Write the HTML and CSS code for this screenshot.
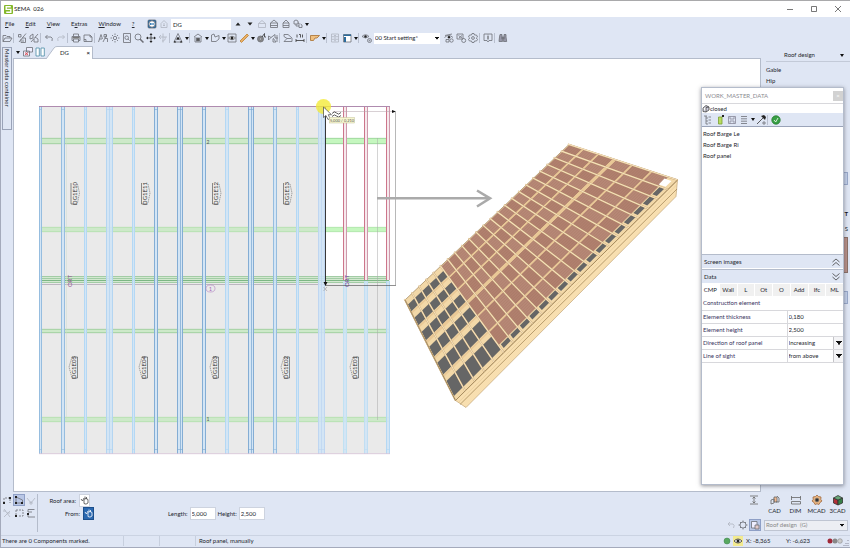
FILE: index.html
```html
<!DOCTYPE html>
<html lang="en">
<head>
<meta charset="utf-8">
<title>SEMA 026</title>
<link rel="stylesheet" href="styles.css">
</head>
<body>
<header class="titlebar">
  <svg class="logo" viewBox="0 0 9 9"><rect width="9" height="9" rx="1" fill="#84b82c"/><path d="M6.8 1.8H2.2V4.4H6.8V7.2H2.2" fill="none" stroke="#fff" stroke-width="1.4"/></svg>
  <h1>SEMA&nbsp; 026</h1>
  <div class="winbtns">
    <button aria-label="Minimize"><svg viewBox="0 0 8 8"><path d="M1 4.5H7"/></svg></button>
    <button aria-label="Maximize"><svg viewBox="0 0 8 8"><path d="M1.5 1.5H6.5V6.5H1.5Z"/></svg></button>
    <button aria-label="Close"><svg viewBox="0 0 8 8"><path d="M1 1L7 7M7 1L1 7"/></svg></button>
  </div>
</header>

<nav class="menubar">
  <div class="menus">
    <button><u>F</u>ile</button><button><u>E</u>dit</button><button><u>V</u>iew</button><button>E<u>x</u>tras</button><button><u>W</u>indow</button><button><u>?</u></button>
  </div>
  <button class="ib" aria-label="Remote"><svg viewBox="0 0 12 12"><rect x="2" y="2" width="8" height="8" rx="1" fill="#0b62a8"/><circle cx="6" cy="6" r="3.2" fill="#fff"/><path d="M3.5 6L5 4.8V7.2ZM8.5 6L7 4.8V7.2ZM4.5 5.6H7.5V6.4H4.5Z" fill="#0b62a8" stroke="none"/></svg></button>
  <button class="ib off" aria-label="Building"><svg viewBox="0 0 12 12"><path d="M3 5.5L6 2.5L9 5.5V9.5H3ZM6 5V8M5 7L6 8L7 7"/></svg></button>
  <input class="level" aria-label="Storey" value="DG">
  <button class="ib" aria-label="Up"><svg viewBox="0 0 12 12"><path class="k" d="M3.5 7.5L6 4.5L8.5 7.5Z"/></svg></button>
  <button class="ib" aria-label="Down"><svg viewBox="0 0 12 12"><path class="k" d="M3.5 4.5L6 7.5L8.5 4.5Z"/></svg></button>
  <button class="ib off" aria-label="Roof"><svg viewBox="0 0 12 12"><path d="M2.500 5.500L6 2.500L9.500 5.500V9.500H2.500ZM2.500 5.500H9.500"/></svg></button>
  <button class="ib" aria-label="Storey view"><svg viewBox="0 0 12 12"><path d="M2.500 5L6 2L9.500 5V9.500H2.500ZM2.500 5H9.500M2.500 7.500H9.500"/></svg></button>
  <button class="ib" aria-label="House view"><svg viewBox="0 0 12 12"><path d="M3 5L6 2L9 5V9.500H3ZM3 5H9M3 7.500H9"/></svg></button>
  <button class="ib" aria-label="Structure"><svg viewBox="0 0 12 12"><path d="M2 3L4 2L6 3V6H2ZM6 5H7V9.500H10V7L8.500 6M4 6V8H7"/></svg></button>
  <button class="caret" aria-label="More"></button>
</nav>

<div class="toolbar">
  <button class="ib" aria-label="Open"><svg viewBox="0 0 12 12"><path d="M2 9.500V3.500H5L6 4.500H9V6M2 9.500L4 6H11L9 9.500Z"/></svg></button><i></i>
  <button class="ib" aria-label="Cut"><svg viewBox="0 0 12 12"><path d="M2.500 2.500H5V5H2.500ZM10 1.500L3 10M6 6H9.500V10.500H5V7M7 7.500V10"/></svg></button>
  <button class="ib" aria-label="Copy"><svg viewBox="0 0 12 12"><path d="M2 4L5 2V6L2 7ZM10 2L3 10M7 5L10 7V10H6V7"/></svg></button><i></i>
  <button class="ib" aria-label="Undo"><svg viewBox="0 0 12 12"><path d="M4.500 3L2.500 5L4.500 7M2.500 5H8Q10 5.500 9 9"/></svg></button>
  <button class="ib off" aria-label="Redo"><svg viewBox="0 0 12 12"><path d="M7.500 3L9.500 5L7.500 7M9.500 5H4Q2 5.500 3 9"/></svg></button><i></i>
  <button class="ib" aria-label="Print"><svg viewBox="0 0 12 12"><path d="M3.500 4.500V2H8.500V4.500M3.500 8.500H2V4.500H10V8.500H8.500M3.500 7H8.500V10H3.500Z"/><path d="M2.500 5H9.500V6.500H2.500Z" fill="#777" stroke="none"/></svg></button>
  <button class="ib" aria-label="Page"><svg viewBox="0 0 12 12"><path d="M2 3H8L10 5V9.500H2ZM8 3V5H10M2 7.500H4V9.500"/></svg></button><i></i>
  <button class="ib" aria-label="Marking"><svg viewBox="0 0 12 12"><path d="M1.500 10L4 2.500L5.500 7M2.500 7H5M6 10L9.500 3M7 2.500H9.500V5H7ZM8 6.500H10.500V10"/></svg></button>
  <button class="ib" aria-label="Highlight"><svg viewBox="0 0 12 12"><circle cx="6" cy="6" r="1.700"/><path d="M6 1.500V3M6 9V10.500M1.500 6H3M9 6H10.500M3 3L4 4M8 8L9 9M9 3L8 4M4 8L3 9"/></svg></button>
  <button class="ib" aria-label="Zoom page"><svg viewBox="0 0 12 12"><path d="M2.500 1.500H9.500V10.500H2.500ZM7 7L8.500 8.500"/><circle cx="5.700" cy="5.700" r="1.800"/></svg></button>
  <button class="ib" aria-label="Zoom"><svg viewBox="0 0 12 12"><circle cx="5" cy="5" r="3"/><path d="M7 7L10.500 10.500" stroke-width="1.500"/></svg></button>
  <button class="ib" aria-label="Pan"><svg viewBox="0 0 12 12"><path d="M6 2V10M2 6H10" stroke="#333"/><path class="k" d="M6 1L7.500 3H4.500ZM6 11L7.500 9H4.500ZM1 6L3 4.500V7.500ZM11 6L9 4.500V7.500Z"/></svg></button>
  <button class="ib off" aria-label="Rotate"><svg viewBox="0 0 12 12"><path d="M6 1.500V10.500M2 5H10M4 3L2 5L4 7M8 5Q9 9 5 9"/></svg></button><i></i>
  <button class="ib" aria-label="Compass"><svg viewBox="0 0 12 12"><path d="M6 1.500L10 10H2ZM4 8Q6 5 8 8"/><circle class="k" cx="6" cy="6.500" r="1.300"/><path class="k" d="M1.500 10.500L3 8.500L4 10.500ZM8 10.500L9 8.500L10.500 10.500Z"/></svg></button><button class="caret" aria-label="More"></button><i></i>
  <button class="ib" aria-label="House"><svg viewBox="0 0 12 12"><path d="M2 5L6 2L10 5M3 5V10H9V5"/><rect x="4.500" y="6" width="3" height="3" fill="#555"/></svg></button><button class="caret" aria-label="More"></button>
  <button class="ib" aria-label="Shape"><svg viewBox="0 0 12 12"><path d="M2.500 3L5 2L6 5L10 3.500V7L7 9.500H2.500Z"/></svg></button><button class="caret" aria-label="More"></button>
  <button class="ib" aria-label="Visibility"><svg viewBox="0 0 12 12"><path d="M2 2H10V10H2Z"/><path d="M2.500 6Q6 2.500 9.500 6Q6 9.500 2.500 6Z" fill="#fff"/><circle class="k" cx="6" cy="6" r="1.500"/></svg></button>
  <button class="ib" aria-label="Beam"><svg viewBox="0 0 12 12"><path d="M2 9L9 2L10.500 3.500L3.500 10.500Z" fill="#e8b068" stroke="#c08030"/></svg></button><button class="caret" aria-label="More"></button>
  <button class="ib" aria-label="Machine"><svg viewBox="0 0 12 12"><circle cx="5.500" cy="7" r="3" fill="#888"/><circle cx="5.500" cy="7" r="1" fill="#eee"/><path d="M7 5L9.500 1.500V5H11" stroke="#333"/></svg></button>
  <button class="ib" aria-label="Connect"><svg viewBox="0 0 12 12"><path d="M1.500 4L4 5.500L1.500 8ZM4 5.500L8 2.500V6H11M6 6L9 10H6V7M10 3V10"/></svg></button><i></i>
  <button class="ib" aria-label="Profile"><svg viewBox="0 0 12 12"><path d="M2 2.500H6L10 6V9.500H2L5 6.500L2 4.500ZM5 6.500H9"/></svg></button>
  <button class="ib" aria-label="Dimension"><svg viewBox="0 0 12 12"><path d="M2 7V10M10 7V10M2 8.500H10M3 2.500V5.500M5 2.500H6.500V5.500M8.500 2.500V5.500" stroke="#333"/></svg></button><i></i>
  <button class="ib" aria-label="Timber"><svg viewBox="0 0 12 12"><path d="M1.500 3.500H10.500L8 6H6L4.500 8.500H1.500Z" fill="#f0c080" stroke="#a87030"/></svg></button><button class="caret" aria-label="More"></button><i></i>
  <button class="ib off" aria-label="Cabinet"><svg viewBox="0 0 12 12"><path d="M2.500 2H9.500V10H2.500ZM2.500 4.700H9.500M2.500 7.300H9.500M5 3.500H7M5 6H7M5 8.700H7"/></svg></button>
  <button class="ib" aria-label="Window layout"><svg viewBox="0 0 12 12"><path d="M2.500 2.500H10V10H2.500Z" fill="#fff"/><path d="M2.500 2.500H10V4H2.500ZM3 5H5V10H3Z" fill="#2a6a9c" stroke="none"/></svg></button><button class="caret" aria-label="More"></button><i></i>
  <button class="ib" aria-label="Display"><svg viewBox="0 0 12 12"><path d="M1 4.500Q4.500 1 8 4.500Q4.500 7.500 1 4.500Z"/><circle class="k" cx="4.500" cy="4.500" r="1.200"/><circle cx="8.500" cy="8.500" r="2"/><circle cx="8.500" cy="8.500" r=".5"/></svg></button>
  <select class="setting" aria-label="Display setting"><option>00 Start setting*</option></select>
  <button class="ib" aria-label="Show"><svg viewBox="0 0 12 12"><path d="M1.500 5.500Q5.500 1.500 10 5.500M3 7.500H6V10H3ZM2 3.500L9 2"/><circle class="k" cx="6" cy="5.300" r="1.200"/><circle cx="8.500" cy="8.500" r="1.700"/></svg></button>
  <button class="ib" aria-label="Edit display"><svg viewBox="0 0 12 12"><path d="M2 2H8V7H2ZM3.500 3.500L7 6M7 3.500L4 6"/><circle cx="8.700" cy="8.500" r="2"/></svg></button>
  <button class="ib" aria-label="Options"><svg viewBox="0 0 12 12"><path d="M5 1.500H7L7.500 3L9.500 3L10.500 5L9.300 6L10.500 7.500L9.500 9H7.500L7 10.500H5L4.500 9H2.500L1.500 7.500L2.700 6L1.500 5L2.500 3H4.500Z"/><circle cx="6" cy="6" r="1.400"/></svg></button><i></i>
  <button class="ib" aria-label="Info"><svg viewBox="0 0 12 12"><path d="M2 2H10V8.500H7L6 10L5 8.500H2Z"/><path d="M6 4V7.500M6 2.800V3.400" stroke="#222"/></svg></button><i></i>
  <button class="ib" aria-label="Search"><svg viewBox="0 0 12 12"><path d="M3 2.500H5V5L5.500 9.500H2L2.500 5ZM7 2.500H9V5L9.700 9.500H6.500L7 5ZM5 5H7V7H5Z" fill="#99a"/></svg></button>
</div>

<main class="main">
  <aside class="dock"><button>Master data container</button></aside>
  <section class="work">
    <div class="tabs">
      <button class="caret" aria-label="Windows"></button>
      <button class="ib" aria-label="Close window"><svg viewBox="0 0 12 12"><path d="M4.500 1.500H10.500V6H4.500ZM1.500 5H7.500V10H1.500Z" fill="#eef"/><path d="M3 6.500L6 9M6 6.500L3 9" stroke="#d33"/></svg></button>
      <button class="ib" aria-label="Tile windows"><svg viewBox="0 0 12 12"><path d="M2 2H5.300V10H2ZM7 2H10.300V10H7Z" fill="#fff" stroke="#4a8aa6"/></svg></button>
      <div class="doc"><svg viewBox="0 0 47 13" preserveAspectRatio="none"><path d="M0 13L8 2Q9 .5 11 .5H46.500V13" fill="#fff" stroke="#b4bccb"/></svg><span>DG</span><button aria-label="Close DG">×</button></div>
    </div>
    <svg class="canvas" id="canvas" viewBox="14 59 746 432" preserveAspectRatio="xMinYMin meet" role="img" aria-label="Roof plan and panel view"></svg>
  </section>
  <aside class="side">
    <div class="sidehead"><span>Roof design</span><button class="caret" aria-label="Roof design menu"></button></div>
    <a href="#">Gable</a><a href="#">Hip</a>
    <div class="edge"><b class="eb"></b><strong>T</strong><span>S</span><b class="brick"></b><b class="eb"></b></div>
  </aside>
</main>

<footer class="params">
  <div class="snaps">
    <button class="ib" aria-label="Snap 1"><svg viewBox="0 0 12 12"><path d="M3 9V4H9V9" stroke-dasharray="2 1"/><path class="k" d="M2 8H4V10H2ZM8 3H10V5H8Z"/></svg></button>
    <button class="ib on" aria-label="Snap 2"><svg viewBox="0 0 12 12"><path d="M3 3V9H9.500V6L3 3"/><path class="k" d="M2 2H4V4H2ZM2 8H4V10H2ZM8 8H10V10H8Z"/></svg></button>
    <button class="ib off" aria-label="Snap 3"><svg viewBox="0 0 12 12"><path d="M2 4L6 9L10 4M5 8H7V10H5Z"/></svg></button>
    <button class="ib off" aria-label="Snap 4"><svg viewBox="0 0 12 12"><path d="M3 2L9 10M9 4L3 10M6 6H9M2 4H5"/></svg></button>
    <button class="ib" aria-label="Snap 5"><svg viewBox="0 0 12 12"><path d="M3 3H10V9H5M3 3V8" stroke-dasharray="2 1"/><path class="k" d="M2 8H4V10H2Z"/></svg></button>
    <button class="ib" aria-label="Snap 6"><svg viewBox="0 0 12 12"><path d="M9.500 2.500H3V5H7M3 7V10H10"/><path class="k" d="M2 6H4V8H2Z"/></svg></button>
  </div>
  <div class="picks">
    <p class="area">Roof area: <button class="pick" aria-label="Pick roof area"><svg viewBox="0 0 9 11"><path d="M1 4L2.500 6L4 3M4 5V8.500Q6 10 8 8V4.500L6 3.500L4 4.500M5 4V1.500M6.500 4V2"/></svg></button></p>
    <p class="from">From: <button class="pick sel" aria-label="Pick start"><svg viewBox="0 0 9 11"><path d="M1 4L2.500 6L4 3M4 5V8.500Q6 10 8 8V4.500L6 3.500L4 4.500M5 4V1.500M6.500 4V2"/></svg></button></p>
  </div>
  <div class="sizes">
    <label for="len">Length:</label><input id="len" value="5,000">
    <label for="hgt">Height:</label><input id="hgt" value="2,500">
  </div>
  <div class="modes">
    <div class="moderow">
      <button class="mode" aria-label="Level"><svg viewBox="0 0 12 12"><path d="M2 2H10M2 10H10M6 3V9M4.500 4.500L6 3L7.500 4.500M4.500 7.500L6 9L7.500 7.500"/></svg></button>
      <button class="mode"><svg viewBox="0 0 12 12"><path d="M5 3H8V8H5Z" fill="#f0b890"/><path d="M2 6L5 5V9L2 10ZM8 2L10 4V8H7"/></svg>CAD</button>
      <button class="mode"><svg viewBox="0 0 12 12"><path d="M1.500 2V6M10.500 2V6M1.500 3.500H10.500M1.500 7.500H10.500V10H1.500Z"/></svg>DIM</button>
      <button class="mode"><svg viewBox="0 0 12 12"><path d="M6 1L7.500 2.500L10 3L9.800 5.500L11 7L9 8.500L8 10.500L6 9.800L4 10.500L3 8.500L1 7L2.200 5.500L2 3L4.500 2.500Z" fill="#e8b480" stroke="#a06a40"/><circle cx="6" cy="6" r="1.800" fill="#333"/></svg>MCAD</button>
      <button class="mode"><svg viewBox="0 0 12 12"><path d="M1.500 4L6 6V11L1.500 9Z" fill="#b03038" stroke="#333"/><path d="M6 6L10.500 4V9L6 11Z" fill="#388048" stroke="#333"/><path d="M1.500 4L6 1.500L10.500 4L6 6Z" fill="#68a878" stroke="#333"/></svg>3CAD</button>
    </div>
    <div class="moderow low">
      <button class="ib off" aria-label="Undo mode"><svg viewBox="0 0 12 12"><path d="M5 3L3 5L5 7M3 5H8Q10 6 8.500 9"/></svg></button>
      <button class="ib" aria-label="Mode options"><svg viewBox="0 0 12 12"><circle cx="6" cy="6" r="3"/><path d="M6 1.500V3M6 9V10.500M1.500 6H3M9 6H10.500M3 3L4 4M8 8L9 9M9 3L8 4M4 8L3 9"/></svg></button>
      <button class="ib on" aria-label="Selection"><svg viewBox="0 0 12 12"><path d="M2.500 2.500H8V9H2.500Z" fill="#eef"/><path d="M6 6H10V10H6Z" fill="#e2c8c8"/></svg></button>
      <select class="roof" aria-label="Mode"><option>Roof design&nbsp; (G)</option></select>
    </div>
  </div>
</footer>

<div class="status">
  <span class="msg">There are 0 Components marked.</span><span class="cell"></span><span class="cell"></span><span class="hint">Roof panel, manually</span>
  <svg class="dot" viewBox="0 0 8 8"><circle cx="4" cy="4" r="3" fill="#58a860" stroke="#388048" stroke-width=".5"/></svg>
  <svg class="eye" viewBox="0 0 10 10"><path d="M1 5Q5 1 9 5Q5 9 1 5Z" fill="#fff" stroke="#333" stroke-width=".8"/><circle cx="5" cy="5" r="1.500" fill="#222"/></svg>
  <span class="pos">X: -8,365</span><span class="pos">Y: -6,623</span>
  <svg class="dots" viewBox="0 0 24 10"><circle cx="4" cy="5" r="2.500" fill="#a02838"/><circle cx="9" cy="5" r="2.500" fill="#888"/><circle cx="14" cy="5" r="2.300" fill="#ccc" stroke="#888" stroke-width=".6"/><path d="M22 4V5M22 7V8M22 9V10M20 7V8M20 9V10M18 9V10" stroke="#889"/></svg>
</div>

<section class="float" aria-label="Work master data">
  <div class="ftitle"><span>WORK_MASTER_DATA</span><button aria-label="Close panel">×</button></div>
  <div class="fstate"><svg viewBox="0 0 8 9"><path d="M1 4L4 1.500L7 3V6L4 8M1 4V7.500L4 8V3.500L7 3" fill="#ccd" stroke="#444" stroke-width=".8"/></svg>closed</div>
  <div class="fbar">
    <button class="ib" aria-label="Tree"><svg viewBox="0 0 12 12"><path d="M4 2V10M4 4H6M4 7H6M4 10H6M6.500 3H9M6.500 6H9M6.500 9H9M2 2H5"/></svg></button>
    <button class="ib" aria-label="New"><svg viewBox="0 0 12 12"><path d="M4.500 3H8V10H4.500Z" fill="#b8dc60" stroke="#78a030"/><path class="k" d="M8 1H10V3H8Z"/></svg></button>
    <button class="ib" aria-label="Save"><svg viewBox="0 0 12 12"><path d="M2.500 2.500H9.500V9.500H2.500ZM4 2.500V5H8V2.500M4 9.500V7H8V9.500" stroke="#889"/></svg></button>
    <button class="ib" aria-label="List"><svg viewBox="0 0 12 12"><path d="M3 2.500H9M3 4.800H9M3 7.200H9M3 9.500H9"/></svg></button><button class="caret" aria-label="More"></button>
    <button class="ib" aria-label="Pick"><svg viewBox="0 0 12 12"><path d="M2 10L8 4" stroke="#333"/><path class="k" d="M6 2L10 6L11 3L9 1Z"/><path d="M8 8H10V10H8Z"/></svg></button><i></i>
    <button class="ib" aria-label="Apply"><svg viewBox="0 0 12 12"><circle cx="6" cy="6" r="4.200" fill="#38a044" stroke="#247a30"/><path d="M4 6L5.700 8L8 4" stroke="#fff"/></svg></button>
  </div>
  <ul class="flist"><li>Roof Barge Le</li><li>Roof Barge Ri</li><li>Roof panel</li></ul>
  <button class="fold"><span>Screen images</span><svg viewBox="0 0 8 8"><path d="M.5 4L4 1L7.500 4M.5 7.500L4 4.500L7.500 7.500"/></svg></button>
  <button class="fold"><span>Data</span><svg viewBox="0 0 8 8"><path d="M.5 .5L4 3.500L7.500 .5M.5 4L4 7L7.500 4"/></svg></button>
  <div class="ftabs"><button class="cur">CMP</button><button>Wall</button><button>L</button><button>Ot</button><button>O</button><button>Add</button><button>Ifc</button><button>ML</button></div>
  <table class="props">
    <colgroup><col class="name"><col></colgroup>
    <tr><th colspan="2">Construction element</th></tr>
    <tr><th><label for="th">Element thickness</label></th><td><input id="th" value="0,180"></td></tr>
    <tr><th><label for="eh">Element height</label></th><td><input id="eh" value="2,500"></td></tr>
    <tr><th><label for="dr">Direction of roof panel</label></th><td><select id="dr"><option>Increasing</option></select></td></tr>
    <tr><th><label for="ls">Line of sight</label></th><td><select id="ls"><option>from above</option></select></td></tr>
  </table>
</section>
<script src="drawing.js"></script>
</body>
</html>
```
FILE: styles.css
```css
:root {
  --bg: #dfe6f4;
  --line: #b4bccb;
  --text: #24262e;
}
* { box-sizing: border-box; }
body {
  margin: 0;
  min-height: 100vh;
  display: flex;
  flex-direction: column;
  position: relative;
  background: var(--bg);
  color: var(--text);
  font: 6px/10px Lato, "Open Sans", sans-serif;
  border-top: 1px solid #a9a9ab;
  border-left: 1px solid #a4aabb;
  overflow: hidden;
}
button, input, select {
  font: inherit;
  color: inherit;
  margin: 0;
  padding: 0;
  border: 0;
  background: none;
  border-radius: 0;
}
h1, p, ul { margin: 0; padding: 0; font: inherit; list-style: none; }
a { color: inherit; text-decoration: none; }
select { appearance: none; }
input { min-width: 0; }

.ib { width: 12px; height: 12px; flex: none; display: block; }
.ib svg { display: block; width: 12px; height: 12px; fill: none; stroke: #6c6e76; stroke-width: 0.8; }
.ib.off svg { opacity: 0.4; }
.ib.on { background: #b9c7e6; outline: 1px solid #8e9fc6; outline-offset: -1px; }
.ib svg .k { fill: #222; stroke: none; }
.caret { width: 5px; height: 12px; flex: none; display: grid; place-items: center; }
.caret::before { content: ""; border: 2px solid transparent; border-top: 3px solid #111; border-bottom: 0; }

.titlebar { height: 16px; background: #fff; display: flex; align-items: center; padding: 0 4px 0 3px; }
.logo { width: 9px; height: 9px; }
.titlebar h1 { margin-left: 1px; color: #222; }
.winbtns { margin-left: auto; display: flex; gap: 12px; }
.winbtns svg { display: block; width: 8px; height: 8px; fill: none; stroke: #555; stroke-width: 0.8; }
.winbtns button { width: 12px; }

.menubar { height: 14px; display: flex; align-items: center; }
.menus { display: flex; gap: 11px; width: 145px; padding-left: 4px; }
.menubar .level { width: 60px; height: 11px; background: #fff; padding: 0 2px; margin: 0 1px; }

.toolbar { height: 14px; display: flex; align-items: center; }
.toolbar i, .fbar i { width: 3px; height: 10px; flex: none; border-left: 1px solid #b9c0cf; }
.setting { width: 66px; height: 11px; background: #fff; padding: 0 1px; margin: 0 3px 0 1px; }
.setting, .roof, .props select {
  background-image: linear-gradient(to bottom left, #111 50%, transparent 55%), linear-gradient(to bottom right, #111 50%, transparent 55%);
  background-repeat: no-repeat;
  background-size: 2px 3px;
  background-position: right 5px center, right 3px center;
}
.setting { background-position: right 3px center, right 1px center; }

.main { flex: 1; display: grid; grid-template-columns: 12px minmax(0, 1fr) 89px; min-height: 0; }
.dock { padding-top: 2px; }
.dock button { writing-mode: vertical-rl; width: 10px; height: 83px; margin-left: 1px; border: 1px solid #9aa3b8; text-align: left; line-height: 8px; padding-top: 1px; }
.work { display: flex; flex-direction: column; min-height: 0; }
.tabs { display: flex; align-items: flex-end; height: 14px; padding-left: 2px; border-bottom: 1px solid var(--line); }
.tabs .caret { margin-right: 2px; }
.doc { position: relative; width: 47px; height: 13px; margin: 0 0 -1px; display: flex; align-items: center; padding: 0 3px 0 14px; }
.doc svg { position: absolute; inset: 0; width: 100%; height: 100%; }
.doc span, .doc button { position: relative; }
.doc button { margin-left: auto; font-weight: bold; }
.canvas { flex: 1; min-height: 0; width: 100%; background: #fff; border: 1px solid var(--line); border-width: 0 1px 1px; }

.side { padding: 4px 0 0 5px; display: flex; flex-direction: column; overflow: hidden; }
.sidehead { display: flex; align-items: center; height: 13px; border-bottom: 1px solid #c3cad8; margin-bottom: 3px; }
.sidehead span { flex: 1; text-align: center; padding-right: 6px; }
.sidehead .caret { margin-right: 6px; }
.side a { height: 11px; }
.edge { display: flex; flex-direction: column; align-items: flex-end; padding: 85px 2px 0 0; }
.edge .eb { width: 20px; height: 13px; border: 1px solid #98a8ca; background: #c3d0ea; }
.edge strong { margin-top: 24px; color: #111; }
.edge span { margin-top: 5px; }
.edge .brick { width: 5px; height: 36px; margin: 3px 0 18px; background: #b89088; border: 1px solid #8a7068; }

.params { min-height: 43px; display: flex; padding-top: 2px; }
.snaps { display: grid; grid-template-columns: repeat(3, 12px); align-content: start; row-gap: 1px; height: 38px; border-right: 1px solid var(--line); }
.picks { width: 56px; }
.picks p { display: flex; align-items: center; justify-content: flex-end; gap: 3px; height: 13px; white-space: nowrap; }
.picks .area { padding-right: 4px; }
.pick { width: 11px; height: 13px; background: #fff; border: 1px solid #cdd3df; }
.pick svg { display: block; width: 9px; height: 11px; fill: none; stroke: #444; stroke-width: 0.8; }
.pick.sel { background: #2a68b0; border-color: #1c4f8c; }
.pick.sel svg { stroke: #fff; }
.sizes { display: flex; align-items: center; gap: 2px; height: 13px; margin: 13px 0 0 74px; }
.sizes input { width: 26px; height: 13px; background: #fff; border: 1px solid #cdd3df; padding: 0 1px; }
.modes { margin-left: auto; padding-right: 2px; display: flex; flex-direction: column; align-items: flex-end; }
.moderow { display: flex; }
.mode { width: 21px; display: flex; flex-direction: column; align-items: center; line-height: 9px; }
.mode svg { width: 12px; height: 12px; fill: none; stroke: #666; stroke-width: 0.8; }
.low { margin-top: 4px; align-items: center; }
.roof { width: 84px; height: 11px; margin-left: 3px; border: 1px solid #bfc5d2; background-color: #eceef3; color: #888; padding: 0 1px; line-height: 8px; }

.status { height: 13px; display: flex; align-items: center; border-top: 1px solid #cbd3e2; white-space: nowrap; padding-bottom: 1px; border-bottom: 1px solid #a4aabb; }
.msg { width: 122px; padding-left: 1px; }
.cell, .hint { border-left: 1px solid #c7cfde; height: 10px; }
.cell { width: 36px; }
.hint { flex: 1; padding-left: 3px; }
.dot { width: 8px; height: 8px; }
.eye { width: 10px; height: 10px; margin: 0 3px 0 2px; background: #f2ea90; }
.pos { width: 40px; }
.dots { width: 24px; height: 10px; }

.float {
  position: absolute;
  top: 86px;
  right: 6px;
  width: 143px;
  height: 398px;
  background: #fff;
  border: 1px solid #b4bccb;
  box-shadow: 0 1px 4px rgba(60, 60, 70, 0.55);
  display: flex;
  flex-direction: column;
}
.ftitle { height: 15px; display: flex; align-items: center; justify-content: space-between; color: #8c8c92; padding-left: 3px; }
.ftitle button { width: 10px; height: 10px; background: #d2d2d2; color: #fff; line-height: 8px; }
.fstate { height: 10px; display: flex; align-items: center; border-top: 1px solid #d8d8dc; }
.fstate svg { width: 8px; height: 9px; flex: none; }
.fbar { height: 13px; display: flex; align-items: center; background: var(--bg); }
.flist { height: 128px; padding: 1px; border-top: 1px solid #9aa3b8; line-height: 11px; }
.fold { height: 14px; margin-bottom: 1px; background: var(--bg); border-top: 1px solid #b4bccb; display: flex; align-items: center; justify-content: space-between; padding: 0 3px 0 2px; }
.fold svg { width: 8px; height: 8px; fill: none; stroke: #444; stroke-width: 0.8; }
.ftabs { height: 12px; display: grid; grid-template-columns: repeat(8, 1fr); gap: 1px; margin-bottom: 1px; }
.ftabs button { background: #f0f0f0; }
.ftabs .cur { background: #fff; }
.props { border-collapse: collapse; width: 100%; table-layout: fixed; color: #38345e; }
.props .name { width: 85px; }
.props th, .props td { height: 13px; padding: 0 0 0 1px; text-align: left; font-weight: normal; border-bottom: 1px solid #d8d8dc; line-height: 10px; }
.props td { border-left: 1px solid #d8d8dc; color: var(--text); }
.props input, .props select { display: block; width: 100%; height: 12px; }
.props select {
  background-image: linear-gradient(to bottom left, #111 50%, transparent 55%), linear-gradient(to bottom right, #111 50%, transparent 55%), linear-gradient(#c4c4c8, #c4c4c8), linear-gradient(#f4f4f6, #f4f4f6);
  background-size: 3px 4px, 3px 4px, 1px 100%, 9px 100%;
  background-position: right 4px center, right 1px center, right 9px top, right top;
}
```
FILE: drawing.js
```js
const out = [];
const rect = (x, y, w, h, fill, extra = '') => out.push(`<rect x="${x}" y="${y}" width="${w}" height="${h}" fill="${fill}" ${extra}/>`);
const line = (x1, y1, x2, y2, c, w = 0.6) => out.push(`<path d="M${x1} ${y1}L${x2} ${y2}" stroke="${c}" stroke-width="${w}" fill="none"/>`);
const poly = (pts, fill, extra = '') => out.push(`<polygon points="${pts.map(p => p.map(n => n.toFixed(1)).join()).join(' ')}" fill="${fill}" ${extra}/>`);
const text = (x, y, s, c, size, rot = 0) => out.push(`<text x="${x}" y="${y}" fill="${c}" font-size="${size}" text-anchor="middle" transform="rotate(${rot} ${x} ${y})">${s}</text>`);

/* plan: roof surface and the open panel */
rect(39, 106, 351, 348, '#eaeaea');
rect(325, 107, 65, 173, '#fff');

/* battens */
[[138, 6], [227, 5], [329, 4], [417, 5]].forEach(([y, h], i) => {
  rect(39, y, 350, h, '#cde9c9');
  if (i < 2) rect(325, y, 63, h, '#c5f7bf');
  const c = i === 0 || i === 2 ? '#84c088' : '#a8dca4';
  line(39, y + 0.3, 389, y + 0.3, c);
  line(39, y + h - 0.3, 389, y + h - 0.3, c);
});
rect(39, 276, 350, 7, '#d3e8d0');
[276.5, 278.5, 280.5, 282.5].forEach((y, i) => line(39, y, 389, y, i === 2 ? '#58a064' : '#8cc092', 0.7));
line(39, 284.5, 325, 284.5, '#a8a0ae', 0.7);

/* rafters: left, width, edge colour, top */
const lt = '#b0d6f4', md = '#8fb8dc', dk = '#7aa6d0';
[[39, 3, md, 106], [61, 4, md, 106], [84, 3, lt, 106], [106, 7, '#b0d2f0', 106], [132, 3, lt, 106], [154, 4, dk, 106],
 [177, 6, dk, 106], [202, 4, dk, 106], [225, 4, lt, 106], [248, 6, dk, 106], [273, 4, md, 106], [296, 3, lt, 106],
 [318, 7, '#bcd4f0', 106], [343, 4, '#bee0f2', 281], [364, 4, '#bedcf2', 281], [386, 4, lt, 281]].forEach(([x, w, c, y]) => {
  rect(x, y, w, 454 - y, '#cfe4f7', 'opacity=".85"');
  line(x + 0.5, y, x + 0.5, 454, c, 0.9);
  line(x + w - 0.5, y, x + w - 0.5, 454, c, 0.9);
  if (w > 5) line(x + 3.5, y, x + 3.5, 454, c, 0.7);
  if (y < 200) line(x, 109.5, x + w, 109.5, c);
  line(x, 449.5, x + w, 449.5, c);
});
[343, 364, 386].forEach(x => {
  rect(x, 107, 4, 173, '#f6e8ec');
  line(x + 0.5, 107, x + 0.5, 280, '#c86880', 0.9);
  line(x + 3.5, 107, x + 3.5, 280, '#c890a4', 0.9);
});
line(39, 106.5, 390, 106.5, '#a880a8', 0.9);
line(39, 453.7, 390, 453.7, '#d8c4d8', 0.8);
line(66.5, 138, 66.5, 420, '#c8dcc8', 0.4);
line(377.5, 138, 377.5, 420, '#a8a8a8', 0.5);

/* element labels */
[[74.5, 'DG1E10'], [145, 'DG1E11'], [216, 'DG1E12'], [287, 'DG1E13']].forEach(([x, s]) => {
  text(x + 2, 193.5, s, '#333', 6, -90);
  out.push(`<path d="M${x + 2.5} 204H${x - 3.5}V183" fill="none" stroke="#444" stroke-width=".6"/><path d="M${x + 3} 184L${x + 5} 193L${x + 3} 203" fill="none" stroke="#555" stroke-width=".5" stroke-dasharray="1.5 .7"/>`);
});
[[75, 'DG1E05'], [145, 'DG1E04'], [216, 'DG1E03'], [287, 'DG1E02'], [356, 'DG1E01']].forEach(([x, s]) => {
  text(x + 1, 367.5, s, '#333', 6, -90);
  out.push(`<path d="M${x - 3} 357H${x + 2.5}V378H${x - 3}" fill="none" stroke="#444" stroke-width=".6"/><path d="M${x - 3} 357L${x - 6} 367L${x - 3} 378" fill="none" stroke="#555" stroke-width=".5" stroke-dasharray="1.5 .7"/>`);
});
text(208, 144, '2', '#556', 5);
text(208, 421, '1', '#556', 5);
text(210.5, 290.5, '1', '#a060b0', 5);
out.push('<ellipse cx="210.5" cy="288.5" rx="4.5" ry="3.5" fill="none" stroke="#b080c0" stroke-width=".6"/>');
text(71.5, 281, 'ORT', '#905090', 6, -90);
text(348.5, 281, 'ORT', '#7040a0', 6, -90);

/* panel dimensions */
line(325.5, 107, 325.5, 283, '#222', 0.9);
poly([[323.5, 282], [327.5, 282], [325.5, 286]], '#111');
line(323.5, 287, 327, 291, '#999');
line(327, 287, 323.5, 291, '#999');
line(333, 111.5, 393, 111.5, '#b0a0a8', 0.5);
poly([[392, 110], [392, 113], [396, 111.5]], '#111');
line(395.5, 112, 395.5, 285, '#999', 0.7);
line(325, 285.5, 396, 285.5, '#444', 0.6);

/* leader arrow */
line(377, 198.3, 489, 198.3, '#aaa', 2.6);
out.push('<path d="M477 190.5L490 198.3L477 206.5" fill="none" stroke="#aaa" stroke-width="2.6"/>');

/* pointer */
out.push('<circle cx="323.5" cy="106.5" r="7.6" fill="#f2ea38" opacity=".8"/>');
out.push('<path d="M323.500 107V117.500L326 115.500L328 119.500L330 118.500L328.300 114.700H331.500Z" fill="#fff" stroke="#444" stroke-width=".7"/>');
out.push('<path d="M332 113.500Q334.500 110.500 336.500 113T341 112.500M332 116.500Q334.500 113.500 336.500 116T341 115.500" fill="none" stroke="#333" stroke-width=".8"/>');
rect(329.5, 117.5, 25, 5.5, '#f7f7d0', 'stroke="#c4c298" stroke-width=".5"');
text(342, 122, '5,000 / 0,210', '#555', 4);

/* roof panel in 3D: corners left, ridge, far right, near */
const D = [405, 300], A = [569, 144.5], B = [677.5, 180], E = [455.5, 400.5];
const P = (s, t) => [0, 1].map(k => (1 - s) * ((1 - t) * D[k] + t * A[k]) + s * ((1 - t) * E[k] + t * B[k]));
const quad = (s0, s1, t0, t1, f) => poly([P(s0, t0), P(s0, t1), P(s1, t1), P(s1, t0)], f);
poly([E, B, [676, 196.5], [466, 407.5]], '#f8dfb0', 'stroke="#b89868" stroke-width=".6"');
poly([D, A, B, E], '#f2d8a8', 'stroke="#a08458" stroke-width=".7"');
const S = [0, 0.13, 0.27, 0.42, 0.58, 0.76, 1], N = 23;
for (let j = 0; j < N; j++) {
  const t0 = j / N, t1 = (j + 1) / N;
  for (let i = 0; i < 6; i++) {
    const mid = i === 3 ? 0.014 : 0.006;
    const edge = i === 2 ? 0.014 : 0.006;
    if (j < 5) quad(S[i] + 0.05, i === 5 ? 0.96 : S[i + 1] - 0.014, j / N, t1, '#666');
    else quad(S[i] + mid, i === 5 ? 0.915 : S[i + 1] - edge, t0, t1, (i + j) % 2 ? '#b68876' : '#b0806e');
  }
  if (j >= 5 && j < 22) quad(0.925, 0.968, (j + 0.2) / N, t1, '#666');
}
/* brick courses */
for (let k = 1; k < 46; k++) line(...P(k / 50, 5 / N), ...P(k / 50, 1), '#a06c5c', 0.25);
[0.13, 0.27, 0.42, 0.58, 0.76].forEach((s, i) => line(...P(s, 0), ...P(s, 1), '#e9c896', i === 2 ? 3 : 1.5));
for (let j = 0; j <= N; j++) {
  const a = P(-0.01, j / N), b = P(1, j / N);
  line(...a, ...b, '#c0a070', 1.6);
  line(...a, ...b, '#f7e2bc', 1.1);
}
quad(0.9, 0.965, 0.963, 0.99, '#fff');
line(...E, ...B, '#a08458', 0.6);
line(460, 404.5, 677, 189, '#9c8050', 0.7);
line(458, 402.8, 677, 184.5, '#e0c490', 0.5);
line(...D, ...E, '#a08458', 1);

document.getElementById('canvas').innerHTML = out.join('');
```
